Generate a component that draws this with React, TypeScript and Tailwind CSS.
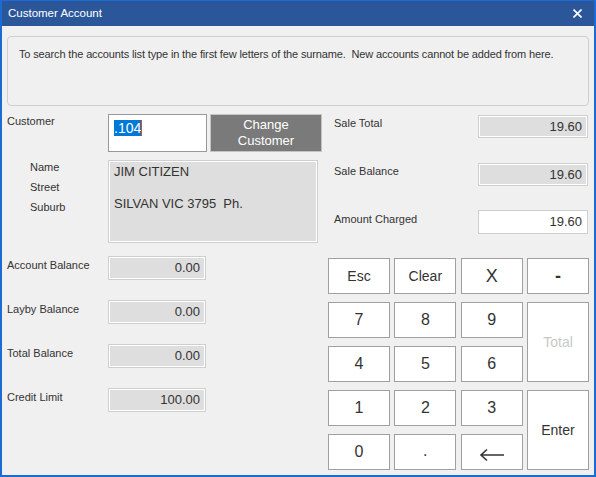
import type { ReactNode } from 'react';

const FONT = { fontFamily: '"Liberation Sans", Arial, sans-serif' };

function Field({ value, white, className = '' }: { value: string; white?: boolean; className?: string }) {
  return (
    <div
      className={`flex items-center justify-end border border-[#cfcfcf] pr-[5px] text-[13px] text-[#333] ${
        white ? 'bg-white' : 'bg-[#dedede] shadow-[inset_0_0_0_1px_#ffffff]'
      } ${className}`}
    >
      {value}
    </div>
  );
}

function Key({ children, className = '' }: { children: ReactNode; className?: string }) {
  return (
    <button
      type="button"
      className={`flex items-center justify-center border border-[#a0a0a0] bg-white text-[#333] ${className}`}
    >
      {children}
    </button>
  );
}

export default function App() {
  const balances = [
    ['Account Balance', '0.00'],
    ['Layby Balance', '0.00'],
    ['Total Balance', '0.00'],
    ['Credit Limit', '100.00'],
  ];

  return (
    <div style={FONT} className="flex h-[477px] w-[596px] flex-col bg-[#f0f0f0] text-[#333]">
      {/* title bar */}
      <div className="flex h-[26px] items-center justify-between border-x-2 border-t border-[#1c6bd4] bg-[#2b579a] pl-[6px] pr-[12px] text-white">
        <span className="text-[11.5px]">Customer Account</span>
        <svg width="9" height="9" viewBox="0 0 9 9" stroke="white" strokeWidth="1.6">
          <path d="M0.5 0.5l8 8M8.5 0.5l-8 8" />
        </svg>
      </div>

      <div className="flex-1 border-x-2 border-b-2 border-[#1c6bd4] px-[5px] pt-[10px]">
        <div className="h-[70px] rounded-[4px] border border-[#cfcfcf] px-[11px] pt-[9px] text-[11px] tracking-[-0.14px]">
          To search the accounts list type in the first few letters of the surname.&nbsp; New accounts cannot be added from here.
        </div>

        <div className="mt-[8px] flex">
          {/* left column */}
          <div className="w-[322px]">
            <div className="flex">
              <div className="-mt-[1px] w-[101px] text-[11px]">Customer</div>
              <div className="h-[38px] w-[99px] border border-[#999] bg-white pl-[5px] pt-[2px] text-[14px]">
                <span className="bg-[#0078d7] text-white">.104</span>
                <span className="inline-block h-[16px] w-px translate-y-[3px] bg-[#e05000]" />
              </div>
              <button
                type="button"
                className="ml-[3px] flex h-[38px] w-[112px] flex-col items-center justify-center border border-[#c4c4c4] bg-[#7a7a7a] text-[13px] leading-[16px] text-white"
              >
                <span>Change</span>
                <span>Customer</span>
              </button>
            </div>

            <div className="mt-[8px] flex">
              <div className="-mt-[3px] flex w-[101px] flex-col pl-[23px] text-[11px] leading-[20px]">
                <span>Name</span>
                <span>Street</span>
                <span>Suburb</span>
              </div>
              <div className="h-[83px] w-[210px] border border-[#cfcfcf] bg-[#dedede] px-[5px] pt-[3px] text-[13px] leading-[16px] shadow-[inset_0_0_0_1px_#ffffff]">
                <div>JIM CITIZEN</div>
                <div className="mt-[16px]">SILVAN VIC 3795&nbsp; Ph.</div>
              </div>
            </div>

            <div className="mt-[13px] flex flex-col gap-[20px]">
              {balances.map(([label, value]) => (
                <div key={label} className="flex">
                  <div className="w-[101px] pt-[1px] text-[11px]">{label}</div>
                  <Field value={value} className="h-[24px] w-[98px]" />
                </div>
              ))}
            </div>
          </div>

          {/* right column */}
          <div className="flex-1">
            <div className="mt-[1px] flex pl-[6px]">
              <div className="w-[144px] text-[11px]">Sale Total</div>
              <Field value="19.60" className="h-[23px] w-[110px]" />
            </div>
            <div className="mt-[25px] flex pl-[6px]">
              <div className="w-[144px] text-[11px]">Sale Balance</div>
              <Field value="19.60" className="h-[23px] w-[110px]" />
            </div>
            <div className="mt-[24px] flex pl-[6px]">
              <div className="w-[144px] pt-[1px] text-[11px]">Amount Charged</div>
              <Field value="19.60" white className="h-[24px] w-[110px]" />
            </div>

            <div className="mt-[24px] grid w-[261px] grid-cols-4 grid-rows-[repeat(5,36px)] gap-x-[4.33px] gap-y-[8px] text-[14px]">
              <Key>Esc</Key>
              <Key>Clear</Key>
              <Key className="text-[18px]">X</Key>
              <Key className="text-[18px] font-bold">-</Key>
              <Key className="text-[16px]">7</Key>
              <Key className="text-[16px]">8</Key>
              <Key className="text-[16px]">9</Key>
              <Key className="row-span-2 text-[#c8c8c8]">Total</Key>
              <Key className="text-[16px]">4</Key>
              <Key className="text-[16px]">5</Key>
              <Key className="text-[16px]">6</Key>
              <Key className="text-[16px]">1</Key>
              <Key className="text-[16px]">2</Key>
              <Key className="text-[16px]">3</Key>
              <Key className="row-span-2">Enter</Key>
              <Key className="text-[16px]">0</Key>
              <Key className="items-end pb-[6px] text-[16px]">.</Key>
              <Key className="pt-[6px]">
                <svg width="26" height="14" viewBox="0 0 26 14" fill="none" stroke="#333" strokeWidth="1.6">
                  <path d="M2 7h23M8 1.5L2 7l6 5.5" />
                </svg>
              </Key>
            </div>
          </div>
        </div>
      </div>
    </div>
  );
}
